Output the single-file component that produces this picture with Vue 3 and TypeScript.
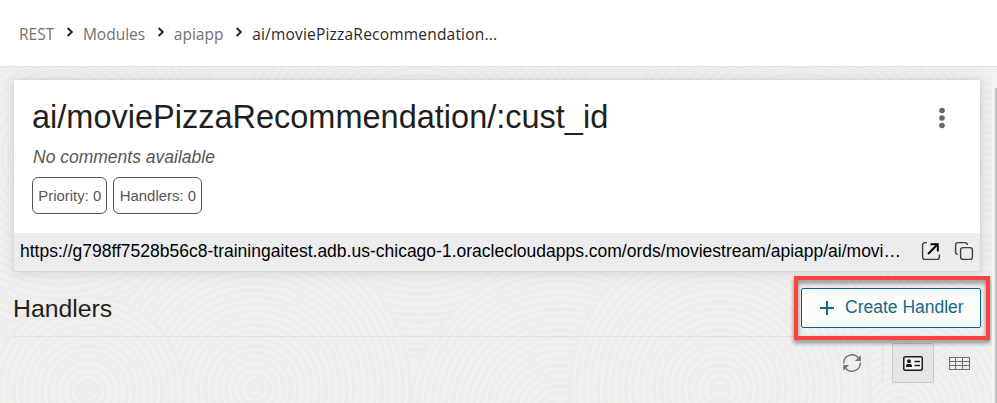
<script setup lang="ts">
interface RingSet {
  cx: number
  cy: number
  r: number
}

const crumbs: string[] = ['REST', 'Modules', 'apiapp']
const current = 'ai/moviePizzaRecommendation...'
const title = 'ai/moviePizzaRecommendation/:cust_id'
const badges: string[] = ['Priority: 0', 'Handlers: 0']
const url =
  'https://g798ff7528b56c8-trainingaitest.adb.us-chicago-1.oraclecloudapps.com/ords/moviestream/apiapp/ai/movi…'

// Overlapping discs, painted in order, form the tree-ring backdrop.
const ringSets: RingSet[] = [
  { cx: 60, cy: 90, r: 170 },
  { cx: 420, cy: 100, r: 190 },
  { cx: 800, cy: 120, r: 190 },
  { cx: 985, cy: 160, r: 150 },
  { cx: 560, cy: 350, r: 150 },
  { cx: 255, cy: 322, r: 155 },
  { cx: 900, cy: 345, r: 120 },
  { cx: 720, cy: 322, r: 150 },
  { cx: 88, cy: 325, r: 95 },
]

function radii(set: RingSet): number[] {
  const list: number[] = []
  for (let r = set.r; r > 3; r -= 7) list.push(r)
  return list
}
</script>

<template>
  <div class="page">
    <header class="topbar">
      <nav class="crumbs">
        <template v-for="c in crumbs" :key="c">
          <a class="crumb">{{ c }}</a>
          <svg class="chevron" viewBox="0 0 8 10" width="8" height="10">
            <path d="M1.6 1 L5.8 5 L1.6 9" />
          </svg>
        </template>
        <span class="current">{{ current }}</span>
      </nav>
    </header>

    <main class="content">
      <svg class="rings" viewBox="0 0 997 336" preserveAspectRatio="none" aria-hidden="true">
        <g v-for="(s, i) in ringSets" :key="i">
          <circle :cx="s.cx" :cy="s.cy" :r="s.r" class="disc" />
          <circle v-for="r in radii(s)" :key="r" :cx="s.cx" :cy="s.cy" :r="r" class="ring" />
        </g>
      </svg>

      <section class="card">
        <div class="card-body">
          <div class="card-head">
            <h1 class="title">{{ title }}</h1>
            <svg class="kebab" viewBox="0 0 6 22" width="6" height="22">
              <circle cx="3" cy="3.5" r="2.8" />
              <circle cx="3" cy="11" r="2.8" />
              <circle cx="3" cy="18.5" r="2.8" />
            </svg>
          </div>
          <p class="comments">No comments available</p>
          <div class="badges">
            <span v-for="b in badges" :key="b" class="badge">{{ b }}</span>
          </div>
        </div>
        <div class="urlbar">
          <span class="url">{{ url }}</span>
          <svg class="url-icon" viewBox="0 0 20 20" width="20" height="20">
            <path class="thin" d="M6 1.6H4A2.4 2.4 0 0 0 1.6 4V16A2.4 2.4 0 0 0 4 18.4H16A2.4 2.4 0 0 0 18.4 16V13.5" />
            <path class="bold" d="M7 13 L16 4 M9.5 3.2H16.8V10.5" />
          </svg>
          <svg class="url-icon copy" viewBox="0 0 20 20" width="20" height="20">
            <path class="thin" d="M3.7 13.4A2.4 2.4 0 0 1 1.6 11V4A2.4 2.4 0 0 1 4 1.6H11A2.4 2.4 0 0 1 13.4 4" />
            <rect class="thin" x="6.6" y="6.6" width="11.8" height="11.8" rx="2.4" />
          </svg>
        </div>
      </section>

      <section class="handlers">
        <div class="handlers-head">
          <h2 class="subtitle">Handlers</h2>
          <div class="create-wrap">
            <button class="create" type="button">
              <svg class="plus" viewBox="0 0 14 14" width="14" height="14">
                <path d="M7 0V14M0 7H14" />
              </svg>
              <span class="create-label">Create Handler</span>
            </button>
            <div class="highlight"></div>
          </div>
        </div>
        <div class="toolbar">
          <svg class="refresh" viewBox="0 0 20 20" width="20" height="20">
            <path class="arc" d="M1.8 10.5A8.2 8.2 0 0 1 16.6 5.2" />
            <path class="arc" d="M18.2 9.5A8.2 8.2 0 0 1 3.4 14.8" />
            <path class="tip" d="M18.8 2.2V8H12.8Z" />
            <path class="tip" d="M1.2 17.8V12H7.2Z" />
          </svg>
          <span class="divider"></span>
          <button class="view active" type="button">
            <svg viewBox="0 0 20 15" width="20" height="15">
              <rect x="0.75" y="0.75" width="18.5" height="13.5" rx="1.5" class="frame" />
              <circle cx="6" cy="5.2" r="2" class="fill" />
              <path d="M3 11V9.8A1.8 1.8 0 0 1 4.8 8H7.2A1.8 1.8 0 0 1 9 9.8V11Z" class="fill" />
              <path d="M11.5 5.5H17M11.5 9.5H17" class="line" />
            </svg>
          </button>
          <button class="view table" type="button">
            <svg viewBox="0 0 21 13" width="21" height="13">
              <path d="M0.5 0.5H20.5V12.5H0.5ZM0.5 4.5H20.5M0.5 8.5H20.5M6.5 0.5V12.5M13.5 0.5V12.5" class="grid" />
            </svg>
          </button>
        </div>
      </section>

      <div class="scroll"><div class="thumb"></div></div>
    </main>
  </div>
</template>

<style>
body {
  margin: 0;
  overflow: hidden;
}
</style>

<style scoped>
.page {
  width: 997px;
  height: 403px;
  display: flex;
  flex-direction: column;
  overflow: hidden;
  background: #fff;
  font-family: 'Liberation Sans', Arial, sans-serif;
}
.topbar {
  box-sizing: border-box;
  height: 67px;
  flex: none;
  padding: 0 19px;
  border-bottom: 1px solid #e1e4e3;
}
.crumbs {
  display: flex;
  align-items: center;
  height: 67px;
  font-family: 'Open Sans', 'Noto Sans', sans-serif;
  font-size: 15.5px;
  line-height: 20px;
  color: #73716f;
  white-space: nowrap;
}
.chevron {
  margin: 0 9.2px 3px 11.5px;
  fill: none;
  stroke: #2b2927;
  stroke-width: 2;
}
.current {
  color: #2b2927;
  font-weight: 500;
  letter-spacing: 0.2px;
}
.content {
  position: relative;
  box-sizing: border-box;
  height: 336px;
  padding: 13px 16px 0 13px;
  background: #f0efed;
}
.rings {
  position: absolute;
  inset: 0;
  width: 997px;
  height: 336px;
}
.disc {
  fill: #f0efed;
}
.ring {
  fill: none;
  stroke: #ecebe9;
  stroke-width: 3;
}
.card {
  position: relative;
  margin-left: 1px;
  width: 966px;
  height: 191px;
  background: #fff;
  box-shadow: 0 0 0 1px rgba(0, 0, 0, 0.035), 0 1px 12px rgba(0, 0, 0, 0.13);
}
.card-body {
  box-sizing: border-box;
  height: 153px;
  padding: 16px 35px 0 18px;
}
.card-head {
  display: flex;
  justify-content: space-between;
  align-items: center;
  height: 42px;
}
.title {
  margin: 0 0 1px;
  font-size: 32.5px;
  line-height: 42px;
  font-weight: 400;
  color: #211f1e;
  white-space: nowrap;
}
.kebab {
  margin-top: 2px;
  fill: #6a6867;
}
.comments {
  margin: 8px 0 0 1px;
  font-size: 17.5px;
  line-height: 22px;
  font-style: italic;
  color: #585654;
}
.badges {
  display: flex;
  gap: 6px;
  margin-top: 9px;
}
.badge {
  box-sizing: border-box;
  height: 37px;
  padding: 0 5.3px;
  border: 1px solid #585654;
  border-radius: 6px;
  font-size: 14.9px;
  line-height: 36px;
  color: #585654;
  white-space: nowrap;
}
.urlbar {
  display: flex;
  align-items: center;
  box-sizing: border-box;
  height: 38px;
  padding: 0 6px 2px 6px;
  background: #ececee;
}
.url {
  flex: 1;
  min-width: 0;
  font-size: 17.5px;
  line-height: 24px;
  color: #000;
  white-space: nowrap;
}
.url-icon {
  flex: none;
}
.url-icon.copy {
  margin-left: 13px;
}
.thin {
  fill: none;
  stroke: #403e3c;
  stroke-width: 1.4;
}
.bold {
  fill: none;
  stroke: #000;
  stroke-width: 1.9;
}
.handlers {
  position: relative;
  width: 968px;
}
.handlers-head {
  box-sizing: border-box;
  display: flex;
  justify-content: space-between;
  align-items: flex-start;
  height: 66px;
  padding-top: 17px;
  border-bottom: 1px solid #dedfdf;
}
.subtitle {
  margin: 5px 0 0;
  font-size: 24.8px;
  line-height: 32px;
  font-weight: 400;
  color: #211f1e;
}
.create-wrap {
  position: relative;
  width: 180px;
  height: 40px;
}
.create {
  display: flex;
  align-items: center;
  box-sizing: border-box;
  width: 180px;
  height: 40px;
  padding: 0 0 0 18px;
  background: #fcfcfb;
  border: 1px solid #00688c;
  border-radius: 2px;
  font: 17.5px/22px 'Liberation Sans', Arial, sans-serif;
  color: #16688b;
}
.create-label {
  margin: -3px 0 0 11px;
  white-space: nowrap;
}
.plus {
  fill: none;
  stroke: #16688b;
  stroke-width: 2;
}
.highlight {
  position: absolute;
  left: -7px;
  top: -12px;
  box-sizing: border-box;
  width: 196px;
  height: 64px;
  border: 4px solid #fc4343;
  filter: drop-shadow(0 3px 2px rgba(0, 0, 0, 0.45));
}
.toolbar {
  display: flex;
  align-items: flex-start;
  justify-content: flex-end;
  padding-top: 6px;
}
.refresh {
  margin: 10px 20px 0 0;
}
.arc {
  fill: none;
  stroke: #777573;
  stroke-width: 1.4;
}
.tip {
  fill: #777573;
}
.divider {
  width: 1px;
  height: 38px;
  margin-right: 9px;
  background: #e0e1e0;
}
.view {
  display: flex;
  align-items: center;
  justify-content: center;
  box-sizing: border-box;
  width: 42px;
  height: 40px;
  margin-left: 5px;
  padding: 0;
  border: 1px solid transparent;
  border-radius: 2px;
  background: transparent;
}
.view.table {
  padding-right: 1px;
}
.view.active {
  margin-left: 0;
  background: #e4e6e5;
  border-color: #c8cbca;
}
.frame {
  fill: #f4f3f1;
  stroke: #211f1e;
  stroke-width: 1.5;
}
.fill {
  fill: #211f1e;
}
.line {
  stroke: #211f1e;
  stroke-width: 1.3;
}
.grid {
  fill: none;
  stroke: #6f6d6b;
  stroke-width: 1;
}
.scroll {
  position: absolute;
  right: 0;
  top: 0;
  width: 5px;
  height: 336px;
  background: #f2f2f1;
}
.thumb {
  width: 2px;
  height: 315px;
  margin: 21px 0 0 3px;
  background: #c1c1c1;
}
</style>
